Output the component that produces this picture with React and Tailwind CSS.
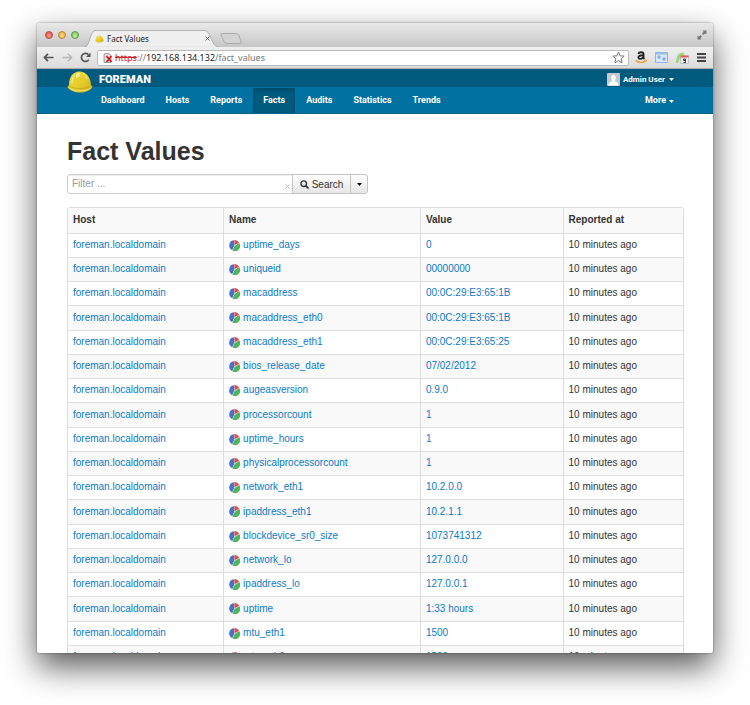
import React from "react";

const facts = [
  ["uptime_days", "0"],
  ["uniqueid", "00000000"],
  ["macaddress", "00:0C:29:E3:65:1B"],
  ["macaddress_eth0", "00:0C:29:E3:65:1B"],
  ["macaddress_eth1", "00:0C:29:E3:65:25"],
  ["bios_release_date", "07/02/2012"],
  ["augeasversion", "0.9.0"],
  ["processorcount", "1"],
  ["uptime_hours", "1"],
  ["physicalprocessorcount", "1"],
  ["network_eth1", "10.2.0.0"],
  ["ipaddress_eth1", "10.2.1.1"],
  ["blockdevice_sr0_size", "1073741312"],
  ["network_lo", "127.0.0.0"],
  ["ipaddress_lo", "127.0.0.1"],
  ["uptime", "1:33 hours"],
  ["mtu_eth1", "1500"],
  ["mtu_eth0", "1500"],
];

const navItems = ["Dashboard", "Hosts", "Reports", "Facts", "Audits", "Statistics", "Trends"];

function Helmet({ className }) {
  return (
    <svg viewBox="0 0 26 22" className={className} aria-hidden="true">
      <defs>
        <linearGradient id="shell" x1="0" y1="0" x2="1" y2="1">
          <stop offset="0" stopColor="#f3dd4a" />
          <stop offset="0.6" stopColor="#e3c826" />
          <stop offset="1" stopColor="#c4a412" />
        </linearGradient>
      </defs>
      <path d="M2 14C2 6 6 1 12 .6 19 .4 23.500 6 24 14l1.500 1.500C24 19.500 18 21.500 13 21.500S2.500 19.500 .5 16z" fill="url(#shell)" />
      <path d="M2 15c5 3.500 17 3.500 22 0" fill="none" stroke="#c8aa1c" strokeWidth=".8" />
      <path d="M1 16c6 4 18 4 24 0-2 3.300-7 4.500-12 4.500S3 19.300 1 16z" fill="#efdc5c" />
      <path d="M9 4C10.500 2 12 1.600 13 2l-1 4c-1.300 0-2 .4-3 1z" fill="#faf0a0" />
      <path d="M16 2.500c2 .8 3.500 2.500 4 5" fill="none" stroke="#f8ec90" />
      <path d="M5 12C5 8 6.500 5 8 4" fill="none" stroke="#faf0a0" />
    </svg>
  );
}

function Pie() {
  return (
    <svg viewBox="0 0 11 11" className="size-[11px] shrink-0" aria-hidden="true">
      <path d="M5.300 5.500V.3A5.200 5.200 0 0 0 3.200 10.200z" fill="#4a72c8" />
      <path d="M5.500 5.300V.1A5.200 5.200 0 0 1 10.200 2.800z" fill="#e34b4b" />
      <path d="M5.600 5.900L10.300 3.100A5.200 5.200 0 0 1 3.500 10.500z" fill="#4fb45c" />
    </svg>
  );
}

function Caret({ className }) {
  return (
    <svg viewBox="0 0 6 3" preserveAspectRatio="none" className={"h-[3px] w-[5px] shrink-0 " + className} aria-hidden="true">
      <path d="M0 0h6L3 3z" fill="currentColor" />
    </svg>
  );
}

function TabStrip() {
  return (
    <div className="flex h-6 shrink-0 items-end rounded-t-[3px] bg-linear-to-b from-[#e9e9e9] to-[#c6c6c6] pl-2 pr-[6px]">
      <div className="flex gap-[5px] self-center">
        <span className="size-2 rounded-full border border-[#b94a43] bg-radial-[at_50%_65%] from-[#ff9b93] to-[#d8433c]" />
        <span className="size-2 rounded-full border border-[#b98432] bg-radial-[at_50%_65%] from-[#ffe08a] to-[#e79a35]" />
        <span className="size-2 rounded-full border border-[#5b9a48] bg-radial-[at_50%_65%] from-[#c7f0a4] to-[#6cb752]" />
      </div>
      <div className="relative ml-[6px] flex h-[17px] w-[135px] items-center px-[10px]">
        <svg viewBox="0 0 138 17" preserveAspectRatio="none" className="absolute inset-0 h-full w-full" aria-hidden="true">
          <path d="M0 17C5 16 5 2 10 .5H123C129 2 129 16 136 17z" fill="#efefef" stroke="#a4a4a4" strokeWidth=".8" />
          <path d="M2 17h132" stroke="#efefef" strokeWidth="1.500" />
        </svg>
        <Helmet className="relative h-2 w-[9px]" />
        <span className="relative ml-[3px] flex-1 whitespace-nowrap text-[8px] leading-4 text-[#222] font-['Noto_Sans',sans-serif]">Fact Values</span>
        <button aria-label="Close tab" className="relative text-[#777]">
          <svg viewBox="0 0 5 5" className="size-[5px]"><path d="M.5.5l4 4m0-4l-4 4" stroke="currentColor" /></svg>
        </button>
      </div>
      <button aria-label="New tab" className="mb-[3px]">
        <svg viewBox="0 0 22 11" className="h-[11px] w-[22px]">
          <path d="M2 .5h14q2 0 3 2l2 6q.5 2-1 2H7q-2 0-3-2L1 2Q.5.5 2 .5z" fill="#d3d3d3" stroke="#a6a6a6" strokeWidth=".9" />
        </svg>
      </button>
      <button aria-label="Full screen" className="ml-auto self-center text-[#777]">
        <svg viewBox="0 0 10 10" className="size-[10px]">
          <path d="M5.500.5h4v4L8.300 3.300 6.500 5 5 3.500l1.700-1.800zM.5 5.500v4h4L3.300 8.300 5 6.500 3.500 5 1.700 6.700z" fill="currentColor" />
        </svg>
      </button>
    </div>
  );
}

function Toolbar() {
  return (
    <div className="flex h-[22px] shrink-0 items-center border-b border-[#aaa] bg-linear-to-b from-[#efefef] to-[#dcdcdc] pl-[6px] pr-[7px]">
      <button aria-label="Back" className="text-[#555]">
        <svg viewBox="0 0 11 9" className="h-[9px] w-[11px]"><path d="M5 .8L1.400 4.500 5 8.200M1.500 4.500H10.500" fill="none" stroke="currentColor" strokeWidth="1.700" /></svg>
      </button>
      <button aria-label="Forward" className="ml-2 text-[#b8b8b8]">
        <svg viewBox="0 0 11 9" className="h-[9px] w-[11px]"><path d="M6 .8L9.600 4.500 6 8.200M9.500 4.500H.5" fill="none" stroke="currentColor" strokeWidth="1.400" /></svg>
      </button>
      <button aria-label="Reload" className="ml-[7px] text-[#555]">
        <svg viewBox="0 0 11 11" className="size-[11px]"><path d="M8.800 7.600A4 4 0 1 1 8.300 2.600" fill="none" stroke="currentColor" strokeWidth="1.700" /><path d="M10.500.5v4.500H6z" fill="currentColor" /></svg>
      </button>
      <div className="ml-[6px] flex h-4 flex-1 items-center rounded-[2px] border border-[#bbb] bg-white pl-[5px] pr-[3px]">
        <svg viewBox="0 0 10 10" className="size-[10px] shrink-0" aria-hidden="true">
          <path d="M1 9.500V2Q1 .5 2.500.5H6L8 2.500v7z" fill="#ddd" stroke="#888" strokeWidth=".8" />
          <path d="M3.500 3l5 6M8.500 3L3.500 9" stroke="#d3161c" strokeWidth="1.700" />
        </svg>
        <div className="ml-[2px] whitespace-nowrap text-[9px] leading-[14px] text-[#222] font-['Noto_Sans',sans-serif]">
          <span className="text-[#c9252b] line-through">https</span><span className="text-[#777]">://</span>192.168.134.132<span className="text-[#777]">/fact_values</span>
        </div>
        <button aria-label="Bookmark" className="ml-auto text-[#777]">
          <svg viewBox="0 0 13 13" className="size-[13px]"><path d="M6.500 1l1.600 3.800 4.100.3-3.100 2.700 1 4-3.600-2.200-3.600 2.200 1-4L.8 5.100l4.100-.3z" fill="#fff" stroke="currentColor" /></svg>
        </button>
      </div>
      <div className="ml-[6px] flex items-center gap-2">
        <svg viewBox="0 0 12 13" className="h-[13px] w-3" aria-hidden="true">
          <path d="M3.300 3C4 .8 8.500.4 8.500 3.400V7l.8 1M8.400 4.300C5 4.100 3.200 5 3.400 6.500 3.600 8.500 7.600 8.300 8.400 6" fill="none" stroke="#222" strokeWidth="1.900" />
          <path d="M.8 9.500c3 2.600 7 2.600 9.500.5" fill="none" stroke="#f0a040" strokeWidth="1.700" />
          <path d="M9 9l2.500-.2-.7 2.400" fill="none" stroke="#f0a040" />
        </svg>
        <svg viewBox="0 0 13 11" className="h-[11px] w-[13px]" aria-hidden="true">
          <path d="M.5.5h12v10H.5z" fill="#d9e7fa" stroke="#8fb5e8" />
          <path d="M1 1h11v1.500H1z" fill="#9dbfec" />
          <path d="M3 4h2v2H3zM8 6h2v2H8z" fill="none" stroke="#6f9fe0" />
        </svg>
        <svg viewBox="0 0 13 12" className="h-3 w-[13px]" aria-hidden="true">
          <path d="M0 11C0 3 4-1 9 1l-2 1 3 2-6 2-2 5z" fill="#9fd67c" />
          <path d="M4.500 4h8v7.500h-8z" fill="#eee" stroke="#aaa" strokeWidth=".6" />
          <path d="M4.500 3.500h8v2h-8z" fill="#db6158" />
          <path d="M9.500 9V7h-2v1.500h2V10.500h-2" fill="none" stroke="#333" />
        </svg>
        <button aria-label="Menu" className="text-[#444]">
          <svg viewBox="0 0 9 9" className="size-[9px]"><path d="M0 1h9M0 4.500h9M0 8h9" stroke="currentColor" strokeWidth="2" /></svg>
        </button>
      </div>
    </div>
  );
}

function Header() {
  return (
    <header className="shrink-0 font-bold text-white font-[Roboto,sans-serif]">
      <div className="flex h-[18px] items-center bg-[#005a7e] pl-[30px] pr-[39px]">
        <Helmet className="relative z-10 mt-2 h-[22px] w-[26px] shrink-0" />
        <a href="#" className="ml-[6px] mt-[3px] text-[11px] leading-4 font-black">FOREMAN</a>
        <button className="ml-auto mt-[3px] flex items-center text-[8px] leading-3">
          <svg viewBox="0 0 13 13" className="mr-[3px] size-[13px]" aria-hidden="true">
            <rect width="13" height="13" rx="1" fill="#c5c9cc" />
            <path d="M6.500 2C8.500 2 9 3.500 8.800 5 8.700 6.500 8 7.300 8 8c0 1 3.500 1 3.500 4.500h-10C1.500 9 5 9 5 8c0-.7-.7-1.500-.8-3C4 3.500 4.500 2 6.500 2z" fill="#fff" />
          </svg>
          Admin User
          <Caret className="ml-1" />
        </button>
      </div>
      <nav className="flex h-[27px] items-stretch gap-px border-b border-[#00618a] bg-[#0071a0] pl-[54px] pr-[39px] pt-px text-[9px]">
        {navItems.map((item) => (
          <a
            key={item}
            href="#"
            className={"flex items-center px-[10px] pt-px " + (item === "Facts" ? "bg-[#005a7e] shadow-[inset_0_2px_4px_rgba(0,0,0,0.2)]" : "")}
          >
            {item}
          </a>
        ))}
        <button className="ml-auto flex items-center pt-px">
          More
          <Caret className="ml-[3px]" />
        </button>
      </nav>
    </header>
  );
}

function SearchBar() {
  return (
    <form className="mt-2 flex h-5 w-[301px] text-[10px] text-[#333]" onSubmit={(e) => e.preventDefault()}>
      <div className="flex min-w-0 flex-1 items-center rounded-l-[3px] border border-[#ccc] bg-white pl-1 pr-[2px] shadow-[inset_0_1px_1px_rgba(0,0,0,0.07)]">
        <input aria-label="Filter" placeholder="Filter ..." className="min-w-0 flex-1 bg-transparent leading-4 outline-none placeholder:text-[#999]" />
        <button type="button" aria-label="Clear filter" className="mt-1 text-[#bbb]">
          <svg viewBox="0 0 5 5" className="size-[5px]"><path d="M.3.3l4.400 4.400m0-4.400L.3 4.700" stroke="currentColor" /></svg>
        </button>
      </div>
      <button className="-ml-px flex w-[59px] items-center justify-center gap-[3px] border border-[#c4c4c4] bg-linear-to-b from-white to-[#e6e6e6]">
        <svg viewBox="0 0 9 9" className="size-[9px]" aria-hidden="true"><circle cx="3.700" cy="3.700" r="2.800" fill="none" stroke="#333" strokeWidth="1.400" /><path d="M5.700 5.700l2.800 2.800" stroke="#333" strokeWidth="1.700" /></svg>
        Search
      </button>
      <button type="button" aria-label="Search options" className="-ml-px flex w-[18px] items-center justify-center rounded-r-[3px] border border-[#c4c4c4] bg-linear-to-b from-white to-[#e6e6e6] text-black">
        <Caret className="" />
      </button>
    </form>
  );
}

function FactTable() {
  return (
    <div className="mt-[13px] overflow-hidden rounded-t-[3px] border border-[#ddd]">
      <table className="w-full table-fixed border-collapse text-left text-[10px] leading-4 text-[#333] [&_td]:border-t [&_td]:border-[#ddd] [&_td]:p-0 [&_td]:pl-[5px] [&_td+td]:border-l [&_th]:pl-[5px] [&_th+th]:border-l [&_th+th]:border-[#ddd]">
        <colgroup>
          <col className="w-[25.300%]" />
          <col className="w-[32%]" />
          <col className="w-[23.200%]" />
          <col />
        </colgroup>
        <thead>
          <tr className="h-[25px] bg-[#f9f9f9] font-bold">
            <th>Host</th>
            <th>Name</th>
            <th>Value</th>
            <th>Reported at</th>
          </tr>
        </thead>
        <tbody>
          {facts.map(([name, value]) => (
            <tr key={name} className="h-6 even:bg-[#f9f9f9] nth-[4n]:h-[25px]">
              <td><a href="#" className="text-[#0b7ac9]">foreman.localdomain</a></td>
              <td>
                <div className="flex items-center gap-[3px]">
                  <Pie />
                  <a href="#" className="text-[#0b7ac9]">{name}</a>
                </div>
              </td>
              <td><a href="#" className="text-[#0b7ac9]">{value}</a></td>
              <td>10 minutes ago</td>
            </tr>
          ))}
        </tbody>
      </table>
    </div>
  );
}

export default function App() {
  return (
    <div className="flex h-screen flex-col bg-white px-[37px] pb-[52px] pt-[23px] font-['Liberation_Sans',Arial,sans-serif]">
      <div className="flex min-h-0 flex-1 flex-col rounded-t-[3px] rounded-b-[2px] bg-white shadow-[0_14px_32px_rgba(0,0,0,0.65),0_0_2px_rgba(0,0,0,0.5)]">
        <TabStrip />
        <Toolbar />
        <Header />
        <main className="min-h-0 flex-1 overflow-hidden pl-[30px] pr-[29px] pt-[23px]">
          <h1 className="text-[25px] font-bold leading-[29px] text-[#333]">Fact Values</h1>
          <SearchBar />
          <FactTable />
        </main>
      </div>
    </div>
  );
}
